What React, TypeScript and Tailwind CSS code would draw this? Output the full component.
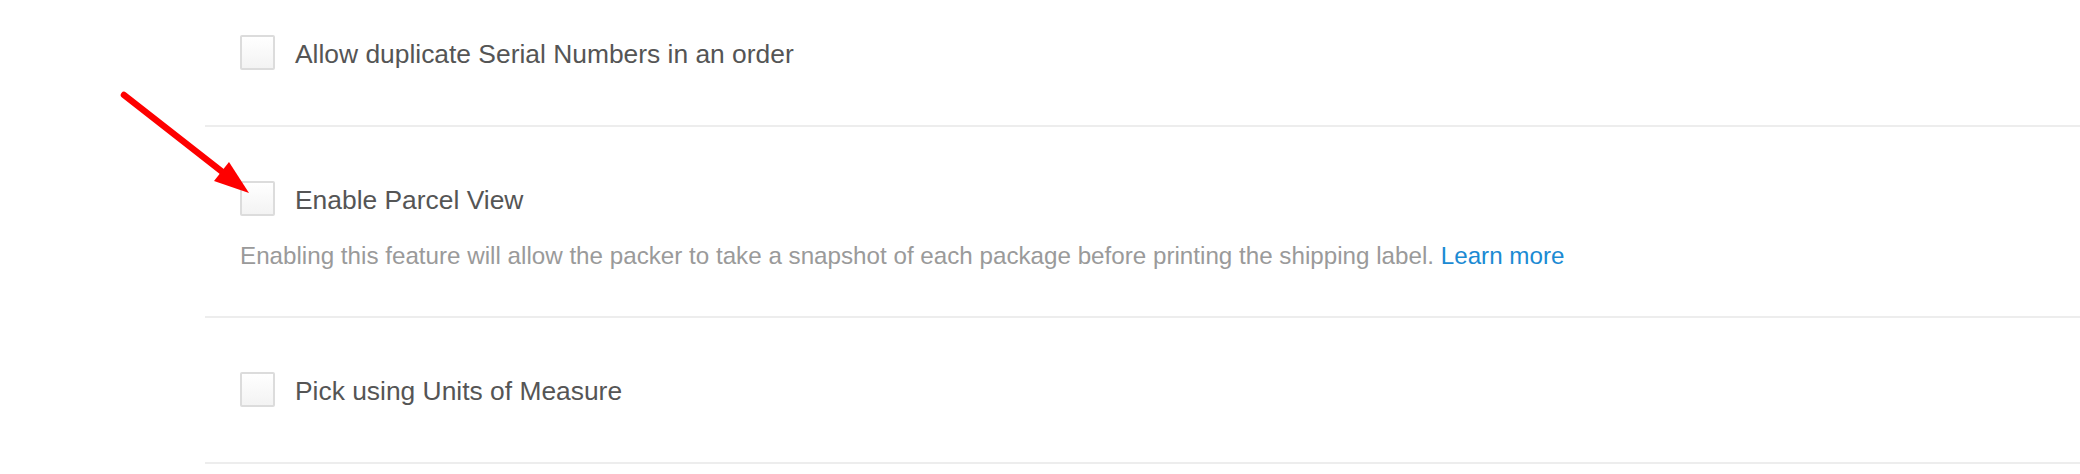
import React from 'react';

const Checkbox = () => (
  <span className="block w-[35px] h-[35px] shrink-0 rounded-[2px] border-2 border-[#dcdcdc] bg-gradient-to-b from-white to-[#f3f3f3]" />
);

const settings = [
  { label: 'Allow duplicate Serial Numbers in an order', first: true },
  {
    label: 'Enable Parcel View',
    description:
      'Enabling this feature will allow the packer to take a snapshot of each package before printing the shipping label.',
  },
  { label: 'Pick using Units of Measure' },
];

const App = () => {
  return (
    <div
      className="relative w-[2080px] h-[474px] bg-white overflow-hidden"
      style={{ fontFamily: '"Liberation Sans", Arial, Helvetica, sans-serif' }}
    >
      <div className="ml-[205px]">
        {settings.map((s, i) => (
          <div
            key={i}
            className={`border-b-2 border-[#ededed] pl-[35px] ${s.first ? 'pt-[35px]' : 'pt-[54px]'} ${s.description ? 'pb-[45px]' : 'pb-[55px]'}`}
          >
            <label className="flex items-center gap-[20px] h-[35px]">
              <Checkbox />
              <span className="text-[26.4px] leading-none text-[#555555] pt-[4px]">{s.label}</span>
            </label>
            {s.description && (
              <p className="mt-[25px] text-[24.2px] leading-[30px] text-[#9a9a9a]">
                {s.description}{' '}
                <a href="#" className="text-[#1b8ad3]">Learn more</a>
              </p>
            )}
          </div>
        ))}
      </div>

      {/* annotation arrow */}
      <svg className="absolute left-0 top-0 pointer-events-none" width="300" height="220" viewBox="0 0 300 220">
        <line x1="124" y1="95" x2="225" y2="174" stroke="#fe0000" strokeWidth="6.5" strokeLinecap="round" />
        <polygon points="249,193 214,181 229,162" fill="#fe0000" />
      </svg>
    </div>
  );
};

export default App;
